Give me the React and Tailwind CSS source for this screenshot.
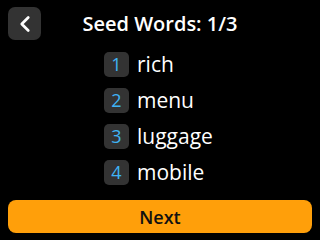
import React from "react";
import { ChevronLeft } from "lucide-react";

const words = ["rich", "menu", "luggage", "mobile"];

export default function App() {
  return (
    <div
      className="w-[320px] h-[240px] bg-black text-white flex flex-col overflow-hidden"
      style={{ fontFamily: '"Open Sans", sans-serif' }}
    >
      {/* Header */}
      <div className="relative h-[47px] flex items-center justify-center">
        <button className="absolute left-[8px] top-[7px] w-[33px] h-[33px] rounded-[7px] bg-[#333333] flex items-center justify-center">
          <ChevronLeft className="w-[26px] h-[26px] text-white" strokeWidth={2.5} />
        </button>
        <h1 className="text-[20px] font-semibold leading-none">Seed Words: 1/3</h1>
      </div>

      {/* Word list */}
      <div className="flex flex-col gap-[12px] pl-[104px] mt-[5px]">
        {words.map((w, i) => (
          <div key={w} className="flex items-center gap-[8px] h-[24px]">
            <div className="w-[25px] h-[25px] rounded-[5px] bg-[#333333] flex items-center justify-center text-[18px] text-[#3fb3f5] leading-none">
              {i + 1}
            </div>
            <span className="text-[21px] leading-none">{w}</span>
          </div>
        ))}
      </div>

      {/* Next button */}
      <button className="mx-[8px] mt-auto mb-[7px] h-[33px] rounded-[8px] bg-[#ff9f0a] text-[#111111] text-[18px] font-semibold leading-none flex items-center justify-center">
        Next
      </button>
    </div>
  );
}
